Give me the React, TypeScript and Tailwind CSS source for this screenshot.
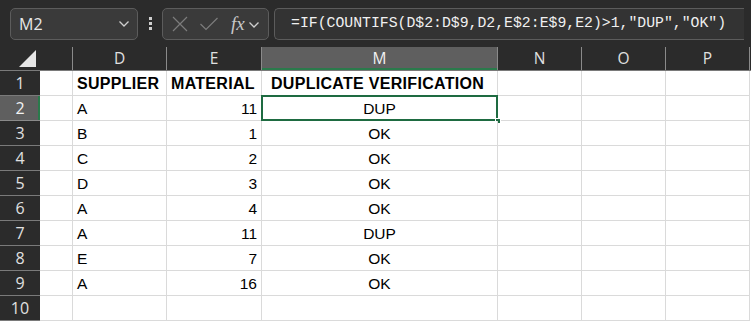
import React from 'react';

const cols = [
  { key: 'blank', label: '', w: 'w-[33px]' },
  { key: 'D', label: 'D', w: 'w-[94px]' },
  { key: 'E', label: 'E', w: 'w-[95px]' },
  { key: 'M', label: 'M', w: 'w-[236px]' },
  { key: 'N', label: 'N', w: 'w-[84px]' },
  { key: 'O', label: 'O', w: 'w-[84px]' },
  { key: 'P', label: 'P', w: 'w-[84px]' },
];

const rows: [string, string, string][] = [
  ['SUPPLIER', 'MATERIAL', 'DUPLICATE VERIFICATION'],
  ['A', '11', 'DUP'],
  ['B', '1', 'OK'],
  ['C', '2', 'OK'],
  ['D', '3', 'OK'],
  ['A', '4', 'OK'],
  ['A', '11', 'DUP'],
  ['E', '7', 'OK'],
  ['A', '16', 'OK'],
  ['', '', ''],
];

const Chevron = () => (
  <svg width="12" height="8" viewBox="0 0 12 8" fill="none">
    <path d="M1.5 1.5 L6 6 L10.5 1.5" stroke="#cfcfcf" strokeWidth="1.3" />
  </svg>
);

function TopBar() {
  return (
    <div className="h-[47px] bg-[#2b2b2b] flex items-center pl-[10px] gap-0">
      <div className="w-[128px] h-[32px] rounded-[5px] border border-[#5c5c5c] bg-[#3a3a3a] flex items-center justify-between pl-[8px] pr-[7px]">
        <span className="text-[16px] text-[#e8e8e8] font-['Open_Sans',sans-serif]">M2</span>
        <Chevron />
      </div>
      <div className="w-[24px] flex flex-col items-center gap-[2px]">
        <span className="w-[3px] h-[3px] bg-[#cfcfcf]" />
        <span className="w-[3px] h-[3px] bg-[#cfcfcf]" />
        <span className="w-[3px] h-[3px] bg-[#cfcfcf]" />
      </div>
      <div className="w-[107px] h-[32px] rounded-[5px] border border-[#5c5c5c] bg-[#3a3a3a] flex items-center pl-[8px]">
        <svg width="18" height="18" viewBox="0 0 18 18" fill="none">
          <path d="M2 2 L16 16 M16 2 L2 16" stroke="#7c7c7c" strokeWidth="1.2" />
        </svg>
        <svg className="ml-[10px]" width="20" height="16" viewBox="0 0 20 16" fill="none">
          <path d="M1.5 8 L7 13.5 L18.5 2" stroke="#7c7c7c" strokeWidth="1.2" />
        </svg>
        <span className="ml-[12px] italic text-[19px] leading-none text-[#c8c8c8] font-['Liberation_Serif',serif]">fx</span>
        <span className="ml-[3px] mt-[2px]">
          <Chevron />
        </span>
      </div>
      <div className="ml-[5px] w-[470px] h-[32px] rounded-l-[5px] border border-r-0 border-[#5c5c5c] bg-[#333333] flex items-center pl-[16px]">
        <span className="text-[14.8px] text-[#f0f0f0] font-['Liberation_Mono',monospace] whitespace-pre">
          =IF(COUNTIFS(D$2:D$9,D2,E$2:E$9,E2)&gt;1,"DUP","OK")
        </span>
      </div>
    </div>
  );
}

function HeaderRow() {
  return (
    <div className="flex h-[24px] bg-[#2b2b2b] border-b border-[#7a7a7a] font-['Open_Sans',sans-serif]">
      <div className="w-[40px] h-full flex items-end justify-end pr-[4px] pb-[3px]">
        <svg width="17" height="17" viewBox="0 0 17 17">
          <polygon points="17,0 17,17 0,17" fill="#e6e6e6" />
        </svg>
      </div>
      {cols.map((c) => {
        const sel = c.key === 'M';
        return (
          <div
            key={c.key}
            className={`${c.w} h-full flex items-center justify-center text-[15.5px] border-r border-[#8a8a8a] ${
              sel
                ? 'bg-[#5f5f5f] text-[#f2f2f2] shadow-[inset_0_-2px_0_#2a7a4b]'
                : 'text-[#e0e0e0]'
            }`}
          >
            {c.label}
          </div>
        );
      })}
    </div>
  );
}

function Grid() {
  return (
    <div className="flex flex-col">
      {rows.map((r, i) => {
        const n = i + 1;
        const selRow = n === 2;
        const bold = n === 1;
        return (
          <div key={n} className="flex h-[25px]">
            <div
              className={`w-[40px] h-full flex items-center justify-center text-[16px] font-['Open_Sans',sans-serif] border-b ${
                selRow
                  ? 'bg-[#5f5f5f] text-[#f2f2f2] border-[#8a8a8a] shadow-[inset_-2px_0_0_#2a7a4b]'
                  : 'bg-[#2b2b2b] text-[#e0e0e0] border-[#7a7a7a]'
              }`}
            >
              {n}
            </div>
            <div className="w-[33px] h-full bg-white border-r border-b border-[#dadada]" />
            <div
              className={`w-[94px] h-full bg-white border-r border-b border-[#dadada] flex items-center pl-[4px] pt-[1px] text-black font-['Liberation_Sans',sans-serif] ${
                bold ? 'font-bold text-[16px] tracking-[0.3px]' : 'text-[15.5px]'
              }`}
            >
              {r[0]}
            </div>
            <div
              className={`w-[95px] h-full bg-white border-r border-b border-[#dadada] flex items-center pt-[1px] ${
                bold ? 'justify-start pl-[4px] font-bold text-[16px] tracking-[0.3px]' : 'justify-end pr-[4px] text-[15.5px]'
              } text-black font-['Liberation_Sans',sans-serif]`}
            >
              {r[1]}
            </div>
            <div
              className={`relative w-[236px] h-full bg-white border-r border-b border-[#dadada] flex items-center pt-[1px] ${
                bold ? 'justify-start pl-[9px] font-bold text-[16px] tracking-[0.3px]' : 'justify-center text-[15.5px]'
              } text-black font-['Liberation_Sans',sans-serif]`}
            >
              {r[2]}
              {selRow && (
                <>
                  <div className="absolute left-[-1px] top-[-1px] right-[-1px] bottom-[-1px] border-2 border-[#1e6b41]" />
                  <div className="absolute right-[-4px] bottom-[-4px] w-[6px] h-[6px] bg-[#1e6b41] border border-white" />
                </>
              )}
            </div>
            <div className="w-[84px] h-full bg-white border-r border-b border-[#dadada]" />
            <div className="w-[84px] h-full bg-white border-r border-b border-[#dadada]" />
            <div className="w-[84px] h-full bg-white border-r border-b border-[#dadada]" />
            <div className="flex-1 h-full bg-white" />
          </div>
        );
      })}
    </div>
  );
}

export default function App() {
  return (
    <div className="w-[751px] h-[322px] overflow-hidden bg-white">
      <TopBar />
      <HeaderRow />
      <Grid />
    </div>
  );
}
